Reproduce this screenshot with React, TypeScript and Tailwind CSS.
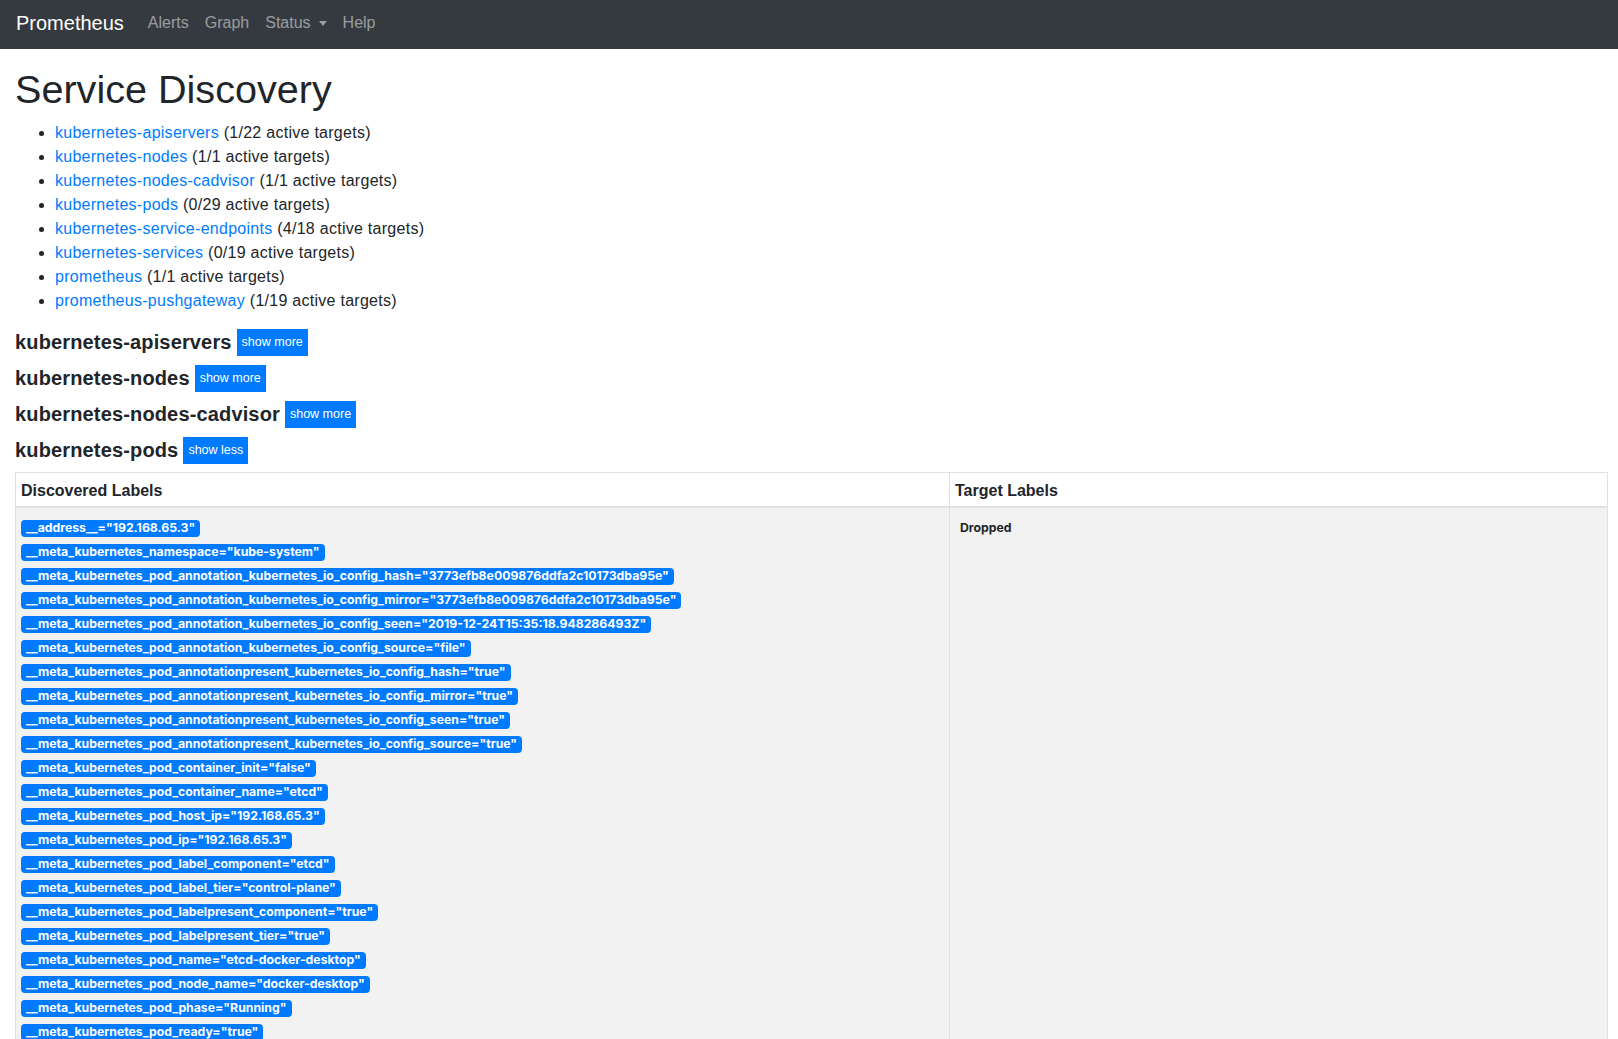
import React, { useState } from 'react';

const font = { fontFamily: '"Liberation Sans", Arial, "Helvetica Neue", sans-serif' };
const badgeFont = { fontFamily: 'Inter, "Liberation Sans", Arial, sans-serif' };

const jobs = [
  { name: 'kubernetes-apiservers', active: 1, total: 22 },
  { name: 'kubernetes-nodes', active: 1, total: 1 },
  { name: 'kubernetes-nodes-cadvisor', active: 1, total: 1 },
  { name: 'kubernetes-pods', active: 0, total: 29 },
  { name: 'kubernetes-service-endpoints', active: 4, total: 18 },
  { name: 'kubernetes-services', active: 0, total: 19 },
  { name: 'prometheus', active: 1, total: 1 },
  { name: 'prometheus-pushgateway', active: 1, total: 19 },
];

const podLabels: [string, string][] = [
  ['__address__', '192.168.65.3'],
  ['__meta_kubernetes_namespace', 'kube-system'],
  ['__meta_kubernetes_pod_annotation_kubernetes_io_config_hash', '3773efb8e009876ddfa2c10173dba95e'],
  ['__meta_kubernetes_pod_annotation_kubernetes_io_config_mirror', '3773efb8e009876ddfa2c10173dba95e'],
  ['__meta_kubernetes_pod_annotation_kubernetes_io_config_seen', '2019-12-24T15:35:18.948286493Z'],
  ['__meta_kubernetes_pod_annotation_kubernetes_io_config_source', 'file'],
  ['__meta_kubernetes_pod_annotationpresent_kubernetes_io_config_hash', 'true'],
  ['__meta_kubernetes_pod_annotationpresent_kubernetes_io_config_mirror', 'true'],
  ['__meta_kubernetes_pod_annotationpresent_kubernetes_io_config_seen', 'true'],
  ['__meta_kubernetes_pod_annotationpresent_kubernetes_io_config_source', 'true'],
  ['__meta_kubernetes_pod_container_init', 'false'],
  ['__meta_kubernetes_pod_container_name', 'etcd'],
  ['__meta_kubernetes_pod_host_ip', '192.168.65.3'],
  ['__meta_kubernetes_pod_ip', '192.168.65.3'],
  ['__meta_kubernetes_pod_label_component', 'etcd'],
  ['__meta_kubernetes_pod_label_tier', 'control-plane'],
  ['__meta_kubernetes_pod_labelpresent_component', 'true'],
  ['__meta_kubernetes_pod_labelpresent_tier', 'true'],
  ['__meta_kubernetes_pod_name', 'etcd-docker-desktop'],
  ['__meta_kubernetes_pod_node_name', 'docker-desktop'],
  ['__meta_kubernetes_pod_phase', 'Running'],
  ['__meta_kubernetes_pod_ready', 'true'],
  ['__meta_kubernetes_pod_uid', 'd1c4d5e4-2a4f-4c52-9c1e-7b0f9e5a1b3c'],
  ['__metrics_path__', '/metrics'],
  ['__scheme__', 'http'],
  ['job', 'kubernetes-pods'],
];

const Navbar = () => (
  <nav className="h-[49px] bg-[#343a40] flex items-start pt-[8px] px-4">
    <a className="text-white text-[20px] leading-[30px] mr-4">Prometheus</a>
    <ul className="flex text-[16px] leading-[30px] text-white/50">
      <li className="px-2">Alerts</li>
      <li className="px-2">Graph</li>
      <li className="px-2 flex items-center">
        Status
        <span className="ml-[8px] mt-[1px] inline-block w-0 h-0 border-x-[4.5px] border-t-[5px] border-x-transparent border-t-white/50" />
      </li>
      <li className="px-2">Help</li>
    </ul>
  </nav>
);

const Badge = ({ children, blue = true }: { children: React.ReactNode; blue?: boolean }) => (
  <span
    style={badgeFont}
    className={
      'inline-flex items-center h-[17px] px-[5px] rounded-[4px] text-[12.25px] leading-none font-bold whitespace-nowrap ' +
      (blue ? 'bg-[#007bff] text-white' : 'text-[#212529]')
    }
  >
    {children}
  </span>
);

const JobHeader = ({ name, open, onToggle }: { name: string; open: boolean; onToggle: () => void }) => (
  <div className="flex items-center h-9">
    <h3 className="text-[20px] font-bold leading-6 tracking-[0.15px] text-[#212529]">{name}</h3>
    <button
      onClick={onToggle}
      className="ml-[5px] h-[27px] px-[5px] bg-[#007bff] text-white text-[12.5px] leading-none"
    >
      {open ? 'show less' : 'show more'}
    </button>
  </div>
);

export default function App() {
  const [open, setOpen] = useState<Record<string, boolean>>({ 'kubernetes-pods': true });
  const shown = jobs.slice(0, 4);

  return (
    <div className="min-h-screen bg-white text-[#212529]" style={font}>
      <Navbar />
      <div className="px-[15px]">
        <h1 className="text-[39.6px] leading-[48px] mt-[16px] mb-[8px]">Service Discovery</h1>
        <ul className="list-disc pl-10 mb-[11px] text-[16px] leading-6 tracking-[0.27px]">
          {jobs.map((j) => (
            <li key={j.name}>
              <a className="text-[#007bff]">{j.name}</a> ({j.active}/{j.total} active targets)
            </li>
          ))}
        </ul>

        {shown.map((j) => (
          <div key={j.name}>
            <JobHeader
              name={j.name}
              open={!!open[j.name]}
              onToggle={() => setOpen({ ...open, [j.name]: !open[j.name] })}
            />
            {open[j.name] && (
              <table className="mt-[4px] w-[1593px] table-fixed border-collapse border border-[#dee2e6] text-left">
                <colgroup>
                  <col className="w-[934px]" />
                  <col />
                </colgroup>
                <thead>
                  <tr>
                    <th className="border border-[#dee2e6] border-b-2 px-[5px] pt-[6px] pb-[3px] text-[16px] leading-6 font-bold">
                      Discovered Labels
                    </th>
                    <th className="border border-[#dee2e6] border-b-2 px-[5px] pt-[6px] pb-[3px] text-[16px] leading-6 font-bold">
                      Target Labels
                    </th>
                  </tr>
                </thead>
                <tbody>
                  <tr className="bg-[#f2f2f2] align-top">
                    <td className="border border-[#dee2e6] px-[5px] pt-[8px] pb-[5px]">
                      {podLabels.map(([k, v]) => (
                        <div key={k} className="h-6 flex items-center">
                          <Badge>
                            {k}="{v}"
                          </Badge>
                        </div>
                      ))}
                    </td>
                    <td className="border border-[#dee2e6] px-[5px] pt-[8px] pb-[5px]">
                      <div className="h-6 flex items-center">
                        <Badge blue={false}>Dropped</Badge>
                      </div>
                    </td>
                  </tr>
                </tbody>
              </table>
            )}
          </div>
        ))}
      </div>
    </div>
  );
}
